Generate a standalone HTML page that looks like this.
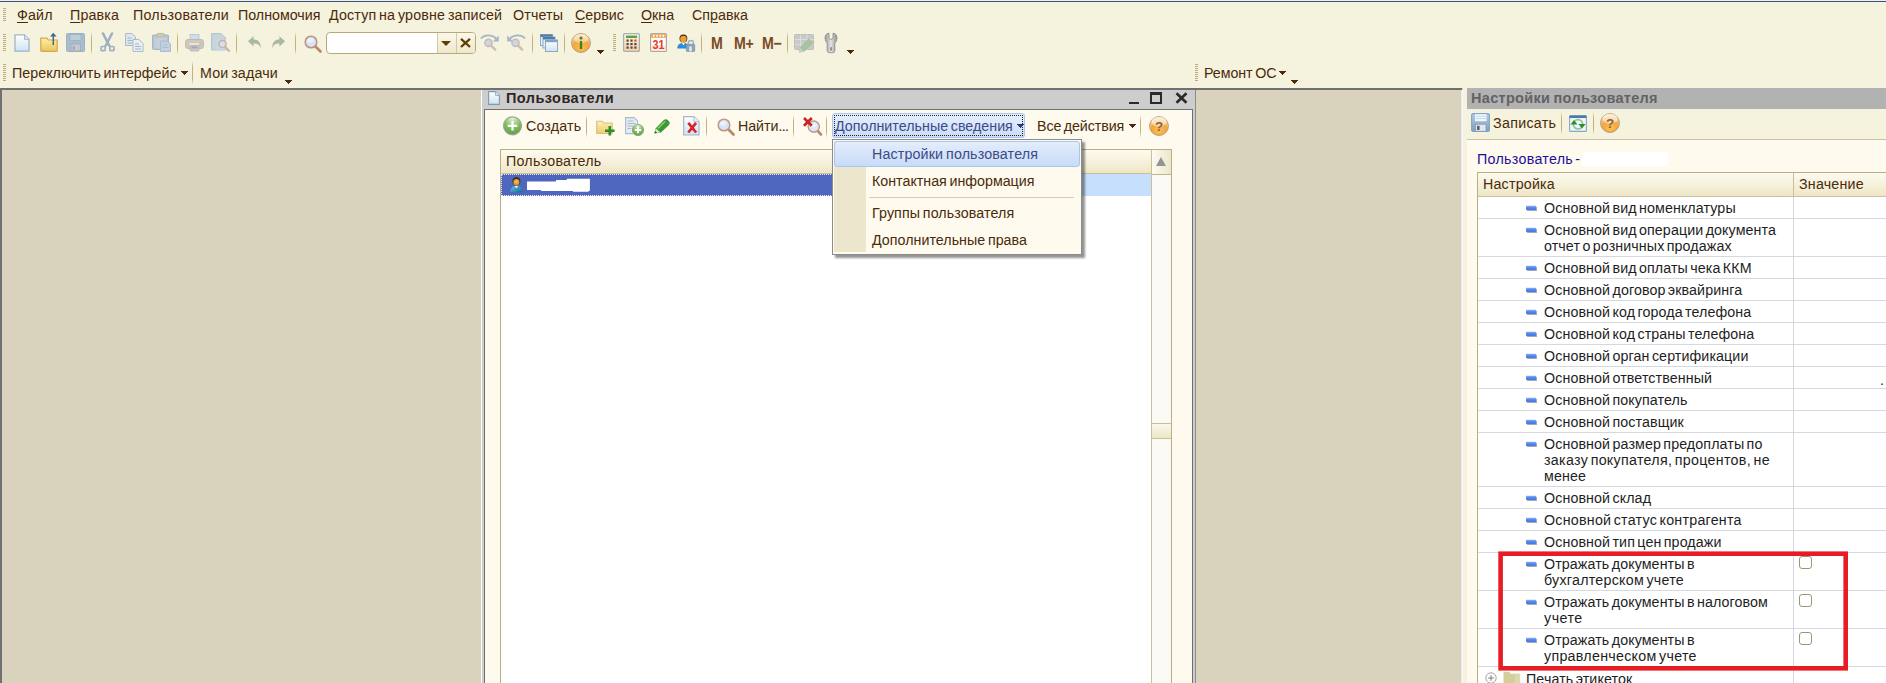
<!DOCTYPE html>
<html lang="ru"><head><meta charset="utf-8"><title>Пользователи</title>
<style>
html,body{margin:0;padding:0}
body{width:1886px;height:683px;overflow:hidden;position:relative;background:#d9d3bd;font-family:"Liberation Sans",sans-serif;font-size:14.25px;line-height:16px;color:#4a2a0a}
.a{position:absolute}
.t{position:absolute;white-space:nowrap;line-height:16px;letter-spacing:.15px;word-spacing:-1.300px}
u{text-decoration:underline;text-underline-offset:1.500px;text-decoration-thickness:1px}
.sep{position:absolute;width:1px;background:#cfc7a4;box-shadow:1px 0 0 #fffdf2}
.grip{position:absolute;width:3px;background:repeating-linear-gradient(to bottom,#b9ad84 0 1px,transparent 1px 2px)}
.arr{position:absolute;width:7px;height:4px;background:#4a2a0a;clip-path:polygon(0 0,7px 0,7px 1px,6px 1px,6px 2px,5px 2px,5px 3px,4px 3px,4px 4px,3px 4px,3px 3px,2px 3px,2px 2px,1px 2px,1px 1px,0 1px)}
svg{position:absolute;overflow:visible}
</style></head><body>
<!-- TOP BAR -->
<div class="a" id="topbar" style="left:0;top:0;width:1886px;height:88px;background:#f5f2dd"></div>
<div class="a" style="left:0;top:0;width:1886px;height:1px;background:#e9eef8"></div>
<div class="a" style="left:0;top:1px;width:1886px;height:1px;background:#43536f"></div>
<!-- workspace top border -->
<div class="a" style="left:0;top:88px;width:1462px;height:2px;background:#707070"></div>
<div class="a" style="left:0;top:88px;width:2px;height:595px;background:#707070"></div>
<div class="grip" style="left:3px;top:8px;height:14px"></div>
<div class="t" style="left:17px;top:7px"><u>Ф</u>айл</div>
<div class="t" style="left:70px;top:7px"><u>П</u>равка</div>
<div class="t" style="left:133px;top:7px;letter-spacing:.25px">Пользователи</div>
<div class="t" style="left:238px;top:7px;letter-spacing:0">Полномочия</div>
<div class="t" style="left:329px;top:7px">Доступ на уровне записей</div>
<div class="t" style="left:513px;top:7px">Отчеты</div>
<div class="t" style="left:575px;top:7px;letter-spacing:.02px"><u>С</u>ервис</div>
<div class="t" style="left:641px;top:7px;letter-spacing:.02px"><u>О</u>кна</div>
<div class="t" style="left:692px;top:7px;letter-spacing:.02px">Сп<u>р</u>авка</div>
<!--MENU-->
<svg width="0" height="0" style="position:absolute"><defs>
<linearGradient id="gDoc" x1="0" y1="0" x2="0" y2="1"><stop offset="0" stop-color="#ffffff"/><stop offset="1" stop-color="#cfe2f3"/></linearGradient>
<linearGradient id="gFold" x1="0" y1="0" x2="0" y2="1"><stop offset="0" stop-color="#fdf0a8"/><stop offset="1" stop-color="#e9c55a"/></linearGradient>
<linearGradient id="gSep" x1="0" y1="0" x2="0" y2="1"><stop offset="0" stop-color="#c4b27c" stop-opacity="0"/><stop offset=".25" stop-color="#c4b27c"/><stop offset=".75" stop-color="#c4b27c"/><stop offset="1" stop-color="#c4b27c" stop-opacity="0"/></linearGradient>
<radialGradient id="gOr" cx=".5" cy=".75" r=".75"><stop offset="0" stop-color="#fbbf55"/><stop offset=".55" stop-color="#f4a63a"/><stop offset="1" stop-color="#fdeccb"/></radialGradient>
<linearGradient id="gBtn" x1="0" y1="0" x2="0" y2="1"><stop offset="0" stop-color="#fbf8ea"/><stop offset="1" stop-color="#efe8cb"/></linearGradient>
<radialGradient id="gGr" cx=".5" cy=".1" r=".95"><stop offset="0" stop-color="#e2f2d4"/><stop offset=".5" stop-color="#84be64"/><stop offset="1" stop-color="#5c9c3e"/></radialGradient>
<linearGradient id="gDash" x1="0" y1="0" x2="0" y2="1"><stop offset="0" stop-color="#8db0f4"/><stop offset=".45" stop-color="#5585ea"/><stop offset="1" stop-color="#4a78de"/></linearGradient>
<linearGradient id="gPeach" x1="0" y1="0" x2="0" y2="1"><stop offset="0" stop-color="#fff4e2"/><stop offset="1" stop-color="#f8cf9f"/></linearGradient>
<linearGradient id="gMetal" x1="0" y1="0" x2="1" y2="0"><stop offset="0" stop-color="#9a9a9a"/><stop offset=".5" stop-color="#e4e4e4"/><stop offset="1" stop-color="#8e8e8e"/></linearGradient>
</defs></svg>
<div class="grip" style="left:3px;top:34px;height:18px"></div>
<!-- new -->
<svg style="left:14px;top:34px" width="16" height="18" viewBox="0 0 16 18"><path d="M1 .8h9.5L15 5.3V17.2H1z" fill="url(#gDoc)" stroke="#9fb4c9" stroke-width="1.3"/><path d="M10.5 .8v4.5H15" fill="#dbe7f3" stroke="#9fb4c9" stroke-width="1"/></svg>
<!-- open -->
<svg style="left:40px;top:32px" width="18" height="20" viewBox="0 0 18 20"><path d="M.8 6.2h6l1.5 1.8h8.9v10.6q0 .8-.8.8H1.6q-.8 0-.8-.8z" fill="url(#gFold)" stroke="#d2a94b" stroke-width="1.2"/><path d="M13.3 13V3.2" stroke="#3f6c8c" stroke-width="1.5" fill="none"/><path d="M10 4.6L13.3 .8l3.3 3.8z" fill="#3f6c8c"/></svg>
<!-- save disabled -->
<svg style="left:66px;top:33px" width="19" height="19" viewBox="0 0 19 19"><rect x=".5" y=".5" width="18" height="18" rx="1" fill="#a9bccb" stroke="#9db2c4"/><rect x="4" y="1.5" width="11" height="6" fill="#bccfd9" stroke="#9ab0c2" stroke-width=".8"/><rect x="5" y="11" width="9.5" height="7" fill="#c7c9cf" stroke="#98abbd" stroke-width=".8"/><rect x="6.8" y="13" width="2" height="4" fill="#98abbd"/></svg>
<div class="a" style="left:91px;top:32px;width:1px;height:23px;background:linear-gradient(#c4b27c00,#c4b27c 25%,#c4b27c 75%,#c4b27c00)"></div>
<!-- cut -->
<svg style="left:100px;top:33px" width="15" height="19" viewBox="0 0 15 19"><path d="M3 .5L9.2 12.5M12 .5L5.8 12.5" stroke="#9db1c5" stroke-width="2.6" fill="none" stroke-linecap="round"/><rect x="1" y="13.5" width="4.2" height="4.2" rx="1" fill="none" stroke="#9db1c5" stroke-width="1.7"/><rect x="9.8" y="13.5" width="4.2" height="4.2" rx="1" fill="none" stroke="#9db1c5" stroke-width="1.7"/><path d="M5 13.5l2.5-3.5 2.5 3.5" stroke="#9db1c5" stroke-width="1.6" fill="none"/></svg>
<!-- copy -->
<svg style="left:125px;top:33px" width="19" height="19" viewBox="0 0 19 19"><path d="M.5 .5h6.5l3.5 3.5v8.5H.5z" fill="#dde6ef" stroke="#a9bccd"/><path d="M2.5 5h4M2.5 7.5h5M2.5 10h5" stroke="#a3b6c9" stroke-width="1"/><path d="M8 6.5h6l4 4v8H8z" fill="#e9eff5" stroke="#a9bccd"/><path d="M10 11h4M10 13.5h6M10 16h6" stroke="#9fb2c6" stroke-width="1"/></svg>
<!-- paste -->
<svg style="left:152px;top:33px" width="19" height="19" viewBox="0 0 19 19"><rect x=".5" y="2" width="16" height="14.5" rx="1" fill="#b9c3d3" stroke="#a5b6cb"/><rect x="5" y=".4" width="7" height="3.6" rx="1" fill="#cfcbb4" stroke="#b3b09c" stroke-width=".8"/><rect x="2.5" y="4.5" width="12" height="11" fill="#c6cfdc"/><path d="M8.5 8h6.5l3.5 3v7.5h-10z" fill="#c3d1df" stroke="#a9bdcf"/><path d="M10.5 12h5M10.5 14.5h6" stroke="#aabdd0" stroke-width="1"/></svg>
<div class="a" style="left:177px;top:32px;width:1px;height:23px;background:linear-gradient(#c4b27c00,#c4b27c 25%,#c4b27c 75%,#c4b27c00)"></div>
<!-- print -->
<svg style="left:185px;top:34px" width="19" height="18" viewBox="0 0 19 18"><rect x="5" y=".5" width="9" height="7" fill="#cfdde8" stroke="#b3c4d2" stroke-width=".8"/><rect x=".6" y="5.5" width="17.8" height="9" rx="2.2" fill="#cfc6bf" stroke="#bdb5b0" stroke-width=".9"/><rect x="4.5" y="9" width="10" height="2" fill="#ece4da"/><rect x="5" y="11.5" width="9" height="5.5" rx="1" fill="#c9c9cb" stroke="#b4b2b2" stroke-width=".8"/><rect x="6.5" y="12.5" width="6" height="2" fill="#a9a7a8"/><rect x="14.3" y="9.3" width="1.5" height="1.5" fill="#a9c8a4"/></svg>
<!-- preview -->
<svg style="left:211px;top:33px" width="19" height="19" viewBox="0 0 19 19"><path d="M.5 .5h9.5l4.5 4.5v12H.5z" fill="#c9d3dc" stroke="#b1c4d3"/><path d="M5 6h9.5v11H5z" fill="#c5d9e8" opacity=".8"/><circle cx="11.5" cy="11" r="3.6" fill="#d3dff0" stroke="#cdb0a0" stroke-width="1.5"/><path d="M14.2 13.8l3.6 4" stroke="#cfb4a4" stroke-width="2.4" stroke-linecap="round"/></svg>
<div class="a" style="left:236px;top:32px;width:1px;height:23px;background:linear-gradient(#c4b27c00,#c4b27c 25%,#c4b27c 75%,#c4b27c00)"></div>
<!-- undo / redo -->
<svg style="left:248px;top:36px" width="13" height="13" viewBox="0 0 13 13"><path d="M0 5.2L5.6 .3v3.1c4.4 0 7.2 2.6 7.2 8.6-1.2-3.4-3.4-4.6-7.2-4.6v3z" fill="#a5b9a3"/></svg>
<svg style="left:272px;top:36px" width="13" height="13" viewBox="0 0 13 13"><path d="M13 5.2L7.4 .3v3.1C3 3.400.2 6 .2 12c1.200-3.400 3.400-4.600 7.200-4.600v3z" fill="#a5b9a3"/></svg>
<div class="a" style="left:295px;top:32px;width:1px;height:23px;background:linear-gradient(#c4b27c00,#c4b27c 25%,#c4b27c 75%,#c4b27c00)"></div>
<!-- search magnifier -->
<svg style="left:304px;top:35px" width="18" height="18" viewBox="0 0 18 18"><path d="M10.500 10.500l6 6" stroke="#b98a68" stroke-width="2.8" stroke-linecap="round"/><circle cx="7" cy="7" r="5.800" fill="#d5e3f8" stroke="#bd917a" stroke-width="1.5"/><ellipse cx="6.200" cy="5.400" rx="3.200" ry="2.200" fill="#eaf2fd"/></svg>
<!-- search box -->
<div class="a" style="left:326px;top:32px;width:148px;height:20px;border:1px solid #b8a979;border-radius:4px;background:#fff;overflow:hidden"><div class="a" style="left:110px;top:0;width:38px;height:20px;background:linear-gradient(#fbf8ea,#efe8cb)"></div><div class="a" style="left:110px;top:0;width:1px;height:20px;background:#d3c9a4"></div><div class="a" style="left:129px;top:0;width:1px;height:20px;background:#d3c9a4"></div></div>
<div class="a" style="left:441px;top:41px;width:0;height:0;border-left:5px solid transparent;border-right:5px solid transparent;border-top:5px solid #5a4100"></div>
<svg style="left:460px;top:38px" width="11" height="10" viewBox="0 0 11 10"><path d="M1 .8l9 8.200M10 .8L1 9" stroke="#5a4100" stroke-width="2.300" fill="none"/></svg>
<!-- find next / prev -->
<svg style="left:480px;top:34px" width="19" height="17" viewBox="0 0 19 17"><path d="M.8 4.500C4.500 .3 12 .3 16.500 4.800" stroke="#a4b7cb" stroke-width="1.700" fill="none"/><path d="M18.800 1.500v6h-6z" fill="#a4b7cb"/><circle cx="8.500" cy="8.800" r="3.600" fill="#c9d7ea" stroke="#cdb9b0" stroke-width="1.500"/><path d="M11.200 11.600l4 4" stroke="#cfbcb4" stroke-width="2.400" stroke-linecap="round"/></svg>
<svg style="left:507px;top:34px" width="19" height="17" viewBox="0 0 19 17"><path d="M18.200 4.500C14.500 .3 7 .3 2.500 4.800" stroke="#a4b7cb" stroke-width="1.700" fill="none"/><path d="M.2 1.500v6h6z" fill="#a4b7cb"/><circle cx="8.500" cy="8.800" r="3.600" fill="#c9d7ea" stroke="#cdb9b0" stroke-width="1.500"/><path d="M11.200 11.600l4 4" stroke="#cfbcb4" stroke-width="2.400" stroke-linecap="round"/></svg>
<div class="a" style="left:532px;top:32px;width:1px;height:23px;background:linear-gradient(#c4b27c00,#c4b27c 25%,#c4b27c 75%,#c4b27c00)"></div>
<!-- windows -->
<svg style="left:540px;top:34px" width="18" height="18" viewBox="0 0 18 18"><rect x=".5" y=".5" width="12" height="11" fill="#e3edf6" stroke="#8fa9c2"/><rect x=".5" y=".5" width="12" height="2.500" fill="#4e7ea6"/><rect x="3" y="3" width="12" height="11" fill="#e3edf6" stroke="#8fa9c2"/><rect x="3" y="3" width="12" height="2.500" fill="#4e7ea6"/><rect x="5.500" y="6" width="12" height="11.500" fill="url(#gDoc)" stroke="#8fa9c2"/><rect x="5.500" y="6" width="12" height="2.200" fill="#7fa3c3"/></svg>
<div class="a" style="left:564px;top:32px;width:1px;height:23px;background:linear-gradient(#c4b27c00,#c4b27c 25%,#c4b27c 75%,#c4b27c00)"></div>
<!-- info -->
<svg style="left:571px;top:33px" width="20" height="20" viewBox="0 0 20 20"><circle cx="10" cy="10" r="9.400" fill="url(#gOr)" stroke="#b59a7c" stroke-width="1"/><ellipse cx="10" cy="5.500" rx="7" ry="4.500" fill="#fff" opacity=".45"/><circle cx="10" cy="5" r="1.500" fill="#3c8422"/><path d="M10 8v8" stroke="#3c8422" stroke-width="2.400"/></svg>
<div class="arr" style="left:597px;top:50px"></div>
<div class="grip" style="left:613px;top:34px;height:18px"></div>
<!-- calculator -->
<svg style="left:623px;top:33px" width="17" height="19" viewBox="0 0 17 19"><rect x=".6" y=".6" width="15.800" height="17.800" rx="1" fill="url(#gPeach)" stroke="#9fb0bf" stroke-width="1.200"/><rect x="3" y="2.600" width="11" height="2.400" fill="#5fa045"/><g fill="#4a4a4a"><rect x="3.500" y="6.500" width="2.200" height="2.200"/><rect x="7.400" y="6.500" width="2.200" height="2.200"/><rect x="3.500" y="10" width="2.200" height="2.200"/><rect x="7.400" y="10" width="2.200" height="2.200"/><rect x="11.300" y="10" width="2.200" height="2.200"/><rect x="3.500" y="13.500" width="2.200" height="2.200"/><rect x="7.400" y="13.500" width="2.200" height="2.200"/><rect x="11.300" y="13.500" width="2.200" height="2.200"/></g><rect x="11.300" y="6.500" width="2.200" height="2.200" fill="#e0483a"/></svg>
<!-- calendar -->
<svg style="left:650px;top:33px" width="17" height="19" viewBox="0 0 17 19"><rect x=".6" y=".6" width="15.800" height="17.800" rx="1" fill="#fff" stroke="#a9a9a4" stroke-width="1.200"/><rect x="1.200" y="1.200" width="14.600" height="3.600" fill="#f0a24a"/><g fill="#fff"><rect x="3" y="1.800" width="1.600" height="2"/><rect x="6.200" y="1.800" width="1.600" height="2"/><rect x="9.400" y="1.800" width="1.600" height="2"/><rect x="12.600" y="1.800" width="1.600" height="2"/></g><rect x="1.200" y="12" width="14.600" height="5.800" fill="#fbe3cc" opacity=".7"/><text x="8.500" y="16.300" text-anchor="middle" font-family="Liberation Sans,sans-serif" font-weight="bold" font-size="12.500" fill="#e4392d" textLength="12" lengthAdjust="spacingAndGlyphs">31</text></svg>
<!-- user lock -->
<svg style="left:677px;top:34px" width="18" height="18" viewBox="0 0 18 18"><circle cx="6.400" cy="4.400" r="3.900" fill="#3c2a14"/><circle cx="6.400" cy="5" r="3.200" fill="#f0a030"/><path d="M.3 14.500c0-4 2.500-5.600 6-5.600s5.800 1.600 5.800 5.600z" fill="#2f8bd8"/><path d="M5 9l1.400 2.500L7.800 9z" fill="#fff"/><path d="M11.300 10.500v-1.300a2.600 2.600 0 015.200 0v1.300" fill="none" stroke="#9fb2c6" stroke-width="1.500"/><rect x="9.300" y="10.300" width="8.400" height="7.200" rx="1" fill="#8da4bd" stroke="#7b93ad" stroke-width=".8"/><rect x="12.300" y="12.500" width="2.400" height="5" fill="#e8eef5"/></svg>
<div class="a" style="left:701px;top:32px;width:1px;height:23px;background:linear-gradient(#c4b27c00,#c4b27c 25%,#c4b27c 75%,#c4b27c00)"></div>
<div class="t" style="left:711px;top:34px;font-weight:bold;font-size:16.500px;line-height:18px;color:#7b4a26;letter-spacing:-.3px;transform:scaleX(.86);transform-origin:0 0">M</div>
<div class="t" style="left:734px;top:34px;font-weight:bold;font-size:16.500px;line-height:18px;color:#7b4a26;letter-spacing:-.3px;transform:scaleX(.86);transform-origin:0 0">M+</div>
<div class="t" style="left:762px;top:34px;font-weight:bold;font-size:16.500px;line-height:18px;color:#7b4a26;letter-spacing:-.3px;transform:scaleX(.86);transform-origin:0 0">M−</div>
<div class="a" style="left:787px;top:32px;width:1px;height:23px;background:linear-gradient(#c4b27c00,#c4b27c 25%,#c4b27c 75%,#c4b27c00)"></div>
<!-- table edit -->
<svg style="left:794px;top:34px" width="20" height="19" viewBox="0 0 20 19"><rect x=".5" y=".5" width="19" height="15" rx="1" fill="#c9c9c7" stroke="#bebebb"/><path d="M.5 5.500h19M.5 10.500h19M6.500 .5v15M13 .5v15" stroke="#dcdcda" stroke-width="1"/><path d="M4.800 18.600L5.800 13.600 14.600 4.200 19.600 9 10.200 17.800z" fill="#a9c1a3"/><path d="M4.800 18.600l1-5 4.400 4.200z" fill="#bfd3bb"/></svg>
<!-- wrench -->
<svg style="left:824px;top:33px" width="14" height="20" viewBox="0 0 14 20"><path d="M1 5Q.8 1.500 3.800 .3H5V5q0 1.200 1 1.200h2q1 0 1-1.200V.3h1.200Q13.200 1.500 13 5q-.2 3.500-2.200 5v7.500q0 2.200-2.300 2.200h-3q-2.300 0-2.300-2.200V10Q1.200 8.500 1 5z" fill="url(#gMetal)" stroke="#909090" stroke-width=".9"/><rect x="6.300" y="14" width="1.500" height="3.800" rx=".7" fill="#7d7d7d"/></svg>
<div class="arr" style="left:847px;top:50px"></div>
<!--TOOLBAR-->
<div class="grip" style="left:3px;top:64px;height:18px"></div>
<div class="t" style="left:12px;top:65px;letter-spacing:.04px">Переключить интерфейс</div>
<div class="arr" style="left:181px;top:71px"></div>
<div class="a" style="left:192px;top:61px;width:1px;height:24px;background:linear-gradient(#c4b27c00,#c4b27c 25%,#c4b27c 75%,#c4b27c00)"></div>
<div class="t" style="left:200px;top:65px">Мои задачи</div>
<div class="arr" style="left:285px;top:80px"></div>
<div class="grip" style="left:1195px;top:64px;height:18px"></div>
<div class="t" style="left:1204px;top:65px;letter-spacing:-.06px">Ремонт ОС</div>
<div class="arr" style="left:1279px;top:71px"></div>
<div class="arr" style="left:1291px;top:80px"></div>
<!--ROW3-->
<!-- middle window -->
<div class="a" style="left:481px;top:90px;width:1px;height:593px;background:#fff"></div>
<div class="a" style="left:482px;top:90px;width:2px;height:593px;background:#cdcdcd"></div>
<div class="a" style="left:482px;top:90px;width:713px;height:19px;background:#cdcdcd"></div>
<div class="a" style="left:1193px;top:90px;width:2px;height:593px;background:#cdcdcd"></div>
<div class="a" style="left:1195px;top:90px;width:1px;height:593px;background:#8c8c8c"></div>
<div class="a" style="left:484px;top:109px;width:709px;height:574px;background:#fefaee;border:1px solid #707070;border-bottom:none;box-sizing:border-box"></div>
<svg style="left:488px;top:91px" width="12" height="14" viewBox="0 0 12 14"><path d="M.6 .6h7l3.800 3.800v9H.6z" fill="url(#gDoc)" stroke="#8199af" stroke-width="1.100"/><path d="M7.600 .6v3.800h3.800" fill="#dfeaf4" stroke="#8ea6bb" stroke-width=".9"/></svg>
<div class="t" style="left:506px;top:90px;font-weight:bold;font-size:14.500px;letter-spacing:.44px;color:#2e2522">Пользователи</div>
<div class="a" style="left:1129px;top:102px;width:10px;height:2px;background:#2a2a2a"></div>
<div class="a" style="left:1150px;top:92px;width:8px;height:7px;border:2px solid #2a2a2a;border-top-width:3px"></div>
<svg style="left:1175px;top:92px" width="13" height="12" viewBox="0 0 13 12"><path d="M1.500 1.200l10 9.600M11.500 1.200l-10 9.600" stroke="#2a2a2a" stroke-width="2.600" fill="none"/></svg>
<!-- win toolbar -->
<svg style="left:503px;top:116px" width="19" height="20" viewBox="0 0 19 20"><circle cx="9.500" cy="9.800" r="9" fill="url(#gGr)" stroke="#97a894" stroke-width="1.200"/><path d="M9.500 5v9.600M4.700 9.800h9.600" stroke="#fff" stroke-width="2.200"/></svg>
<div class="t" style="left:526px;top:118px">Создать</div>
<div class="a sp" style="left:586px;top:115px;width:1px;height:23px;background:linear-gradient(#c4b27c00,#c4b27c 25%,#c4b27c 75%,#c4b27c00)"></div>
<!-- folder+ -->
<svg style="left:596px;top:120px" width="19" height="16" viewBox="0 0 19 16"><path d="M.7 1.200h5.500l1.500 1.800h8.500v10.500H.7z" fill="url(#gFold)" stroke="#d6b566" stroke-width="1.100" opacity=".85"/><path d="M13.800 6v9.500M9 10.800h9.600" stroke="#2c8c2c" stroke-width="2.600"/></svg>
<!-- doc+ -->
<svg style="left:625px;top:117px" width="20" height="19" viewBox="0 0 20 19"><path d="M.6 .6h8.500l3.500 3.500v12.500H.6z" fill="#e4ecf3" stroke="#a9bccd" stroke-width="1.100"/><path d="M2.500 4h6M2.500 6.500h8M2.500 9h6M2.500 11.500h4" stroke="#a9b9c9" stroke-width="1"/><circle cx="13" cy="13" r="5.600" fill="url(#gGr)" stroke="#86a47c" stroke-width=".9"/><path d="M13 9.800v6.400M9.800 13h6.400" stroke="#fff" stroke-width="2"/></svg>
<!-- pencil -->
<svg style="left:654px;top:119px" width="16" height="15" viewBox="0 0 16 15"><path d="M.3 14.500L1.800 9.200 10.300 .5 15.500 5.400 6.700 13.800z" fill="#3a9c2c"/><path d="M10.500 .8l2.200-.6 3 3-.4 2.100z" fill="#2f8424"/><path d="M.5 14.300L2 9.500l4.500 4z" fill="#d9e6d2"/><path d="M.5 14.300l.7-2.300 2 1.700z" fill="#245a1c"/><path d="M4 9.500l7-7" stroke="#8fd07c" stroke-width="1.300"/></svg>
<!-- doc x -->
<svg style="left:683px;top:116px" width="17" height="20" viewBox="0 0 17 20"><path d="M.7 .7h10.300l5 5v13.300H.7z" fill="url(#gDoc)" stroke="#a3b7ca" stroke-width="1.200"/><path d="M11 .7v5h5" fill="#eef3f8" stroke="#a3b7ca" stroke-width=".9"/><path d="M5.300 6.800l7.800 9.700M13.100 6.800L5.300 16.500" stroke="#d6242a" stroke-width="2.700"/></svg>
<div class="a" style="left:706px;top:115px;width:1px;height:23px;background:linear-gradient(#c4b27c00,#c4b27c 25%,#c4b27c 75%,#c4b27c00)"></div>
<svg style="left:717px;top:118px" width="18" height="18" viewBox="0 0 18 18"><path d="M10.500 10.500l6 6" stroke="#b98a68" stroke-width="2.800" stroke-linecap="round"/><circle cx="7" cy="7" r="5.800" fill="#d5e3f8" stroke="#c09882" stroke-width="1.500"/><ellipse cx="6.200" cy="5.400" rx="3.200" ry="2.200" fill="#eaf2fd"/></svg>
<div class="t" style="left:738px;top:118px;letter-spacing:-.05px">Найти<span style="letter-spacing:-.7px">...</span></div>
<div class="a" style="left:793px;top:115px;width:1px;height:23px;background:linear-gradient(#c4b27c00,#c4b27c 25%,#c4b27c 75%,#c4b27c00)"></div>
<svg style="left:803px;top:117px" width="19" height="19" viewBox="0 0 19 19"><path d="M14 13.200l4 4.300" stroke="#b98a68" stroke-width="2.600" stroke-linecap="round"/><circle cx="10.800" cy="9.600" r="5.600" fill="#dbe7f8" stroke="#c09882" stroke-width="1.400"/><ellipse cx="10.500" cy="8.300" rx="3" ry="2" fill="#eef4fd"/><path d="M1 1l7.800 7.800M8.800 1L1 8.800" stroke="#c92424" stroke-width="2.700"/></svg>
<div class="a" style="left:826px;top:115px;width:1px;height:23px;background:linear-gradient(#c4b27c00,#c4b27c 25%,#c4b27c 75%,#c4b27c00)"></div>
<!-- dop sved button -->
<div class="a" style="left:832px;top:113px;width:191px;height:23px;border:1px solid #a9c5f0;border-radius:3px;background:linear-gradient(#e6effd,#cbddf9)"></div>
<div class="a" style="left:834px;top:115px;width:189px;height:21px;border:1px dotted #222;box-sizing:border-box"></div>
<div class="t" style="left:835px;top:118px;color:#3d4a86;letter-spacing:.02px">Дополнительные сведения</div>
<div class="arr" style="left:1017px;top:124px;background:#2c3a7a"></div>
<div class="t" style="left:1037px;top:118px;letter-spacing:-.1px">Все действия</div>
<div class="arr" style="left:1129px;top:124px"></div>
<div class="a" style="left:1140px;top:115px;width:1px;height:23px;background:linear-gradient(#c4b27c00,#c4b27c 25%,#c4b27c 75%,#c4b27c00)"></div>
<svg style="left:1149px;top:116px" width="20" height="20" viewBox="0 0 20 20"><circle cx="10" cy="10" r="9.400" fill="url(#gOr)" stroke="#b59a7c" stroke-width="1"/><ellipse cx="10" cy="5.800" rx="7.500" ry="5" fill="#fff" opacity=".55"/><text x="10" y="14.800" text-anchor="middle" font-family="Liberation Sans,sans-serif" font-weight="bold" font-size="13.500" fill="#8d6046">?</text></svg>
<!--WTB-->
<!-- table -->
<div class="a" style="left:500px;top:149px;width:670px;height:534px;border:1px solid #b9ad84;border-bottom:none;background:#fff"></div>
<div class="a" style="left:501px;top:150px;width:650px;height:23px;background:linear-gradient(#fdfbf0,#f3edd3 70%,#ede5c5)"></div>
<div class="a" style="left:501px;top:173px;width:650px;height:1px;background:#c9bf9b"></div>
<div class="t" style="left:506px;top:153px;letter-spacing:.25px">Пользователь</div>
<div class="a" style="left:501px;top:174px;width:400px;height:22px;background:#4f66bf;outline:1px dotted #e8ecf8;outline-offset:-1px"></div>
<div class="a" style="left:901px;top:174px;width:250px;height:22px;background:#c6dffd"></div>
<svg style="left:509.500px;top:177px" width="13" height="15.500" viewBox="0 0 13 15.500"><defs><linearGradient id="gBody" x1="0" y1="0" x2="1" y2="1"><stop offset="0" stop-color="#6cc0dc"/><stop offset="1" stop-color="#0f6a92"/></linearGradient><radialGradient id="gHead" cx=".5" cy=".4" r=".6"><stop offset="0" stop-color="#f8c060"/><stop offset="1" stop-color="#d88820"/></radialGradient></defs><circle cx="6.400" cy="4.200" r="3.900" fill="#3a2810"/><circle cx="6.400" cy="5.200" r="3.100" fill="url(#gHead)"/><path d="M.3 15.300c0-4.500 2.200-6.300 6.100-6.300s6.100 1.800 6.100 6.300z" fill="url(#gBody)"/><path d="M4.600 9.100l1.800 2.200 1.800-2.200z" fill="#f4f8fa"/></svg>
<svg style="left:527px;top:178px" width="63" height="14" viewBox="0 0 63 14"><path d="M0 3.400H29V2H39.800V.7H62.900V12.500L61 13.700H46V13H14V12H0z" fill="#fff"/></svg>
<!-- scrollbar -->
<div class="a" style="left:1151px;top:150px;width:1px;height:533px;background:#c9bf9b"></div>
<div class="a" style="left:1152px;top:150px;width:19px;height:533px;background:#faf9f3"></div>
<div class="a" style="left:1152px;top:150px;width:19px;height:24px;background:linear-gradient(90deg,#fdfbf1,#ece6cb);border-bottom:1px solid #c0b48a"></div>
<div class="a" style="left:1156px;top:157px;width:0;height:0;border-left:5px solid transparent;border-right:5px solid transparent;border-bottom:9px solid #949494"></div>
<div class="a" style="left:1152px;top:423px;width:19px;height:14px;background:linear-gradient(#fbf8ea,#ece5c8);border-top:1px solid #c9bf9b;border-bottom:1px solid #c9bf9b"></div>
<!-- popup menu -->
<div class="a" style="left:832px;top:139px;width:248px;height:114px;border:1px solid #8c8c8c;background:#fefaee;box-shadow:3px 3px 2px rgba(0,0,0,.42)"></div>
<div class="a" style="left:834px;top:141px;width:32px;height:111px;background:#ece6cc"></div>
<div class="a" style="left:834px;top:141px;width:244px;height:24px;border:1px solid #a9c5f0;border-radius:3px;background:linear-gradient(#e3edfc,#c8dbf8)"></div>
<div class="t" style="left:872px;top:146px;color:#3d4a86;letter-spacing:.15px">Настройки пользователя</div>
<div class="t" style="left:872px;top:173px;letter-spacing:0">Контактная информация</div>
<div class="a" style="left:869px;top:197px;width:205px;height:1px;background:#d6ceb0"></div>
<div class="t" style="left:872px;top:205px;letter-spacing:.1px">Группы пользователя</div>
<div class="t" style="left:872px;top:232px;letter-spacing:.03px">Дополнительные права</div>
<!--POPUP-->
<!--MIDWIN-->
<!-- right panel -->
<div class="a" style="left:1461px;top:90px;width:2px;height:593px;background:linear-gradient(90deg,#e4e4ea,#fff)"></div>
<div class="a" style="left:1463px;top:88px;width:423px;height:595px;background:#fefaee"></div>
<div class="a" style="left:1463px;top:88px;width:4px;height:595px;background:#f5f2dd"></div>
<div class="a" style="left:1467px;top:88px;width:419px;height:21px;background:#b2b2b2"></div>
<div class="t" style="left:1471px;top:90px;font-weight:bold;font-size:14.500px;color:#626262;letter-spacing:.3px;word-spacing:-1px">Настройки пользователя</div>
<div class="a" style="left:1467px;top:109px;width:419px;height:30px;background:#f5f2dd"></div>
<div class="a" style="left:1467px;top:139px;width:419px;height:1px;background:#cbc3a1"></div>
<svg style="left:1471px;top:113px" width="19" height="19" viewBox="0 0 19 19"><defs><linearGradient id="gSv" x1="0" y1="0" x2="0" y2="1"><stop offset="0" stop-color="#b4cde6"/><stop offset="1" stop-color="#7d9fc2"/></linearGradient></defs><rect x=".6" y=".6" width="17.800" height="17.800" rx="1.500" fill="url(#gSv)" stroke="#86a4c2" stroke-width="1.100"/><rect x="4" y="1.200" width="11.500" height="7" fill="#f2f8fc"/><path d="M4.500 3.300h10.500M4.500 5.500h10.500" stroke="#bfd9ea" stroke-width="1"/><rect x="4.500" y="11.200" width="10.500" height="7" fill="#e4e6ea" stroke="#6f8daa" stroke-width=".6"/><rect x="6" y="12.800" width="2.600" height="4.200" fill="#4f647c"/></svg>
<div class="t" style="left:1493px;top:115px;letter-spacing:.3px">Записать</div>
<div class="a" style="left:1561px;top:112px;width:1px;height:23px;background:linear-gradient(#c4b27c00,#c4b27c 25%,#c4b27c 75%,#c4b27c00)"></div>
<svg style="left:1569px;top:115px" width="18" height="17" viewBox="0 0 18 17"><rect x=".6" y=".6" width="16.800" height="15.800" rx="1" fill="#eef4fa" stroke="#8aa6c4" stroke-width="1.100"/><rect x=".6" y=".6" width="16.800" height="2.400" fill="#4c7aa8"/><circle cx="9" cy="9.300" r="4.700" fill="none" stroke="#8cc88c" stroke-width="1.700"/><path d="M1.500 9.600L5 5l3.500 4.600z" fill="#2f8a2f"/><path d="M9.500 9L13 13.600 16.500 9z" fill="#2f8a2f"/></svg>
<div class="a" style="left:1593px;top:112px;width:1px;height:23px;background:linear-gradient(#c4b27c00,#c4b27c 25%,#c4b27c 75%,#c4b27c00)"></div>
<svg style="left:1600px;top:113px" width="20" height="20" viewBox="0 0 20 20"><circle cx="10" cy="10" r="9.400" fill="url(#gOr)" stroke="#b59a7c" stroke-width="1"/><ellipse cx="10" cy="5.800" rx="7.500" ry="5" fill="#fff" opacity=".55"/><text x="10" y="14.800" text-anchor="middle" font-family="Liberation Sans,sans-serif" font-weight="bold" font-size="13.500" fill="#8d6046">?</text></svg>
<div class="t" style="left:1477px;top:151px;color:#1d0f9a;letter-spacing:.3px;word-spacing:-2px">Пользователь -</div>
<div class="a" style="left:1582px;top:152px;width:86px;height:14px;background:#fff;border-radius:3px"></div>
<!-- table -->
<div class="a" style="left:1477px;top:172px;width:409px;height:511px;background:#fff;border-left:1px solid #b9ad84;border-top:1px solid #b9ad84;box-sizing:border-box"></div>
<div class="a" style="left:1478px;top:173px;width:408px;height:23px;background:linear-gradient(#fdfbf0,#f3edd3 70%,#ede5c5)"></div>
<div class="a" style="left:1478px;top:196px;width:408px;height:1px;background:#c9bf9b"></div>
<div class="a" style="left:1793px;top:173px;width:1px;height:23px;background:#c9bf9b"></div>
<div class="a" style="left:1793px;top:197px;width:1px;height:486px;background:#d3d9de"></div>
<div class="t" style="left:1483px;top:176px;letter-spacing:.2px">Настройка</div>
<div class="t" style="left:1799px;top:176px;letter-spacing:.2px">Значение</div>
<div class="a" style="left:1478px;top:218px;width:408px;height:1px;background:#d3d9de"></div>
<svg style="left:1525px;top:204.6px" width="13" height="8" viewBox="0 0 13 8"><rect x="2" y="1.800" width="10" height="4.200" rx=".6" fill="#56627e" opacity=".55"/><rect x="1" y=".8" width="10" height="4.200" rx=".7" fill="url(#gDash)"/></svg>
<div class="t" style="left:1544px;top:200px;color:#1e1e1e;letter-spacing:.1px;word-spacing:-1.700px">Основной вид номенклатуры</div>
<div class="a" style="left:1478px;top:256px;width:408px;height:1px;background:#d3d9de"></div>
<svg style="left:1525px;top:226.6px" width="13" height="8" viewBox="0 0 13 8"><rect x="2" y="1.800" width="10" height="4.200" rx=".6" fill="#56627e" opacity=".55"/><rect x="1" y=".8" width="10" height="4.200" rx=".7" fill="url(#gDash)"/></svg>
<div class="t" style="left:1544px;top:222px;color:#1e1e1e;letter-spacing:.1px;word-spacing:-1.700px">Основной вид операции документа<br>отчет о розничных продажах</div>
<div class="a" style="left:1478px;top:278px;width:408px;height:1px;background:#d3d9de"></div>
<svg style="left:1525px;top:264.6px" width="13" height="8" viewBox="0 0 13 8"><rect x="2" y="1.800" width="10" height="4.200" rx=".6" fill="#56627e" opacity=".55"/><rect x="1" y=".8" width="10" height="4.200" rx=".7" fill="url(#gDash)"/></svg>
<div class="t" style="left:1544px;top:260px;color:#1e1e1e;letter-spacing:.1px;word-spacing:-1.700px">Основной вид оплаты чека ККМ</div>
<div class="a" style="left:1478px;top:300px;width:408px;height:1px;background:#d3d9de"></div>
<svg style="left:1525px;top:286.6px" width="13" height="8" viewBox="0 0 13 8"><rect x="2" y="1.800" width="10" height="4.200" rx=".6" fill="#56627e" opacity=".55"/><rect x="1" y=".8" width="10" height="4.200" rx=".7" fill="url(#gDash)"/></svg>
<div class="t" style="left:1544px;top:282px;color:#1e1e1e;letter-spacing:.1px;word-spacing:-1.700px">Основной договор эквайринга</div>
<div class="a" style="left:1478px;top:322px;width:408px;height:1px;background:#d3d9de"></div>
<svg style="left:1525px;top:308.6px" width="13" height="8" viewBox="0 0 13 8"><rect x="2" y="1.800" width="10" height="4.200" rx=".6" fill="#56627e" opacity=".55"/><rect x="1" y=".8" width="10" height="4.200" rx=".7" fill="url(#gDash)"/></svg>
<div class="t" style="left:1544px;top:304px;color:#1e1e1e;letter-spacing:.1px;word-spacing:-1.700px">Основной код города телефона</div>
<div class="a" style="left:1478px;top:344px;width:408px;height:1px;background:#d3d9de"></div>
<svg style="left:1525px;top:330.6px" width="13" height="8" viewBox="0 0 13 8"><rect x="2" y="1.800" width="10" height="4.200" rx=".6" fill="#56627e" opacity=".55"/><rect x="1" y=".8" width="10" height="4.200" rx=".7" fill="url(#gDash)"/></svg>
<div class="t" style="left:1544px;top:326px;color:#1e1e1e;letter-spacing:.1px;word-spacing:-1.700px">Основной код страны телефона</div>
<div class="a" style="left:1478px;top:366px;width:408px;height:1px;background:#d3d9de"></div>
<svg style="left:1525px;top:352.6px" width="13" height="8" viewBox="0 0 13 8"><rect x="2" y="1.800" width="10" height="4.200" rx=".6" fill="#56627e" opacity=".55"/><rect x="1" y=".8" width="10" height="4.200" rx=".7" fill="url(#gDash)"/></svg>
<div class="t" style="left:1544px;top:348px;color:#1e1e1e;letter-spacing:.1px;word-spacing:-1.700px">Основной орган сертификации</div>
<div class="a" style="left:1478px;top:388px;width:408px;height:1px;background:#d3d9de"></div>
<svg style="left:1525px;top:374.6px" width="13" height="8" viewBox="0 0 13 8"><rect x="2" y="1.800" width="10" height="4.200" rx=".6" fill="#56627e" opacity=".55"/><rect x="1" y=".8" width="10" height="4.200" rx=".7" fill="url(#gDash)"/></svg>
<div class="t" style="left:1544px;top:370px;color:#1e1e1e;letter-spacing:.1px;word-spacing:-1.700px">Основной ответственный</div>
<div class="a" style="left:1478px;top:410px;width:408px;height:1px;background:#d3d9de"></div>
<svg style="left:1525px;top:396.6px" width="13" height="8" viewBox="0 0 13 8"><rect x="2" y="1.800" width="10" height="4.200" rx=".6" fill="#56627e" opacity=".55"/><rect x="1" y=".8" width="10" height="4.200" rx=".7" fill="url(#gDash)"/></svg>
<div class="t" style="left:1544px;top:392px;color:#1e1e1e;letter-spacing:.1px;word-spacing:-1.700px">Основной покупатель</div>
<div class="a" style="left:1478px;top:432px;width:408px;height:1px;background:#d3d9de"></div>
<svg style="left:1525px;top:418.6px" width="13" height="8" viewBox="0 0 13 8"><rect x="2" y="1.800" width="10" height="4.200" rx=".6" fill="#56627e" opacity=".55"/><rect x="1" y=".8" width="10" height="4.200" rx=".7" fill="url(#gDash)"/></svg>
<div class="t" style="left:1544px;top:414px;color:#1e1e1e;letter-spacing:.1px;word-spacing:-1.700px">Основной поставщик</div>
<div class="a" style="left:1478px;top:486px;width:408px;height:1px;background:#d3d9de"></div>
<svg style="left:1525px;top:440.6px" width="13" height="8" viewBox="0 0 13 8"><rect x="2" y="1.800" width="10" height="4.200" rx=".6" fill="#56627e" opacity=".55"/><rect x="1" y=".8" width="10" height="4.200" rx=".7" fill="url(#gDash)"/></svg>
<div class="t" style="left:1544px;top:436px;color:#1e1e1e;letter-spacing:.1px;word-spacing:-1.700px">Основной размер предоплаты по<br><span style="letter-spacing:.3px">заказу покупателя, процентов, не</span><br>менее</div>
<div class="a" style="left:1478px;top:508px;width:408px;height:1px;background:#d3d9de"></div>
<svg style="left:1525px;top:494.6px" width="13" height="8" viewBox="0 0 13 8"><rect x="2" y="1.800" width="10" height="4.200" rx=".6" fill="#56627e" opacity=".55"/><rect x="1" y=".8" width="10" height="4.200" rx=".7" fill="url(#gDash)"/></svg>
<div class="t" style="left:1544px;top:490px;color:#1e1e1e;letter-spacing:.1px;word-spacing:-1.700px">Основной склад</div>
<div class="a" style="left:1478px;top:530px;width:408px;height:1px;background:#d3d9de"></div>
<svg style="left:1525px;top:516.6px" width="13" height="8" viewBox="0 0 13 8"><rect x="2" y="1.800" width="10" height="4.200" rx=".6" fill="#56627e" opacity=".55"/><rect x="1" y=".8" width="10" height="4.200" rx=".7" fill="url(#gDash)"/></svg>
<div class="t" style="left:1544px;top:512px;color:#1e1e1e;letter-spacing:.1px;word-spacing:-1.700px"><span style="letter-spacing:.24px">Основной статус контрагента</span></div>
<div class="a" style="left:1478px;top:552px;width:408px;height:1px;background:#d3d9de"></div>
<svg style="left:1525px;top:538.6px" width="13" height="8" viewBox="0 0 13 8"><rect x="2" y="1.800" width="10" height="4.200" rx=".6" fill="#56627e" opacity=".55"/><rect x="1" y=".8" width="10" height="4.200" rx=".7" fill="url(#gDash)"/></svg>
<div class="t" style="left:1544px;top:534px;color:#1e1e1e;letter-spacing:.1px;word-spacing:-1.700px">Основной тип цен продажи</div>
<div class="a" style="left:1478px;top:590px;width:408px;height:1px;background:#d3d9de"></div>
<svg style="left:1525px;top:560.6px" width="13" height="8" viewBox="0 0 13 8"><rect x="2" y="1.800" width="10" height="4.200" rx=".6" fill="#56627e" opacity=".55"/><rect x="1" y=".8" width="10" height="4.200" rx=".7" fill="url(#gDash)"/></svg>
<div class="t" style="left:1544px;top:556px;color:#1e1e1e;letter-spacing:.1px;word-spacing:-1.700px">Отражать документы в<br><span style="letter-spacing:.25px">бухгалтерском учете</span></div>
<div class="a" style="left:1799px;top:556px;width:11px;height:11px;border:1px solid #9d9676;border-radius:3px;background:#fff"></div>
<div class="a" style="left:1478px;top:628px;width:408px;height:1px;background:#d3d9de"></div>
<svg style="left:1525px;top:598.6px" width="13" height="8" viewBox="0 0 13 8"><rect x="2" y="1.800" width="10" height="4.200" rx=".6" fill="#56627e" opacity=".55"/><rect x="1" y=".8" width="10" height="4.200" rx=".7" fill="url(#gDash)"/></svg>
<div class="t" style="left:1544px;top:594px;color:#1e1e1e;letter-spacing:.1px;word-spacing:-1.700px">Отражать документы в налоговом<br><span style="letter-spacing:.5px">учете</span></div>
<div class="a" style="left:1799px;top:594px;width:11px;height:11px;border:1px solid #9d9676;border-radius:3px;background:#fff"></div>
<div class="a" style="left:1478px;top:666px;width:408px;height:1px;background:#d3d9de"></div>
<svg style="left:1525px;top:636.6px" width="13" height="8" viewBox="0 0 13 8"><rect x="2" y="1.800" width="10" height="4.200" rx=".6" fill="#56627e" opacity=".55"/><rect x="1" y=".8" width="10" height="4.200" rx=".7" fill="url(#gDash)"/></svg>
<div class="t" style="left:1544px;top:632px;color:#1e1e1e;letter-spacing:.1px;word-spacing:-1.700px">Отражать документы в<br><span style="letter-spacing:.28px">управленческом учете</span></div>
<div class="a" style="left:1799px;top:632px;width:11px;height:11px;border:1px solid #9d9676;border-radius:3px;background:#fff"></div>
<svg style="left:1484.500px;top:671.500px" width="12" height="12" viewBox="0 0 12 12"><circle cx="6" cy="6" r="5.200" fill="#fcfcfc" stroke="#a8a8a8" stroke-width="1"/><path d="M6 3.200v5.600M3.200 6h5.600" stroke="#7a7a7a" stroke-width="1"/></svg>
<svg style="left:1503px;top:671px" width="18" height="12" viewBox="0 0 18 12"><path d="M.5 12V1.500q0-.8.8-.8h4.700q.8 0 1 .8l.3 1.200h9.200q.6 0 .6.600V12z" fill="#d3ce9a"/><path d="M12 2.700h4.500q.6 0 .6.600V12H12z" fill="#ddd9ae"/></svg>
<div class="t" style="left:1526px;top:671px;color:#1e1e1e;letter-spacing:.1px;word-spacing:-1.700px">Печать этикеток</div>
<svg style="left:0;top:0" width="1886" height="683" viewBox="0 0 1886 683"><rect x="1500.600" y="553.700" width="345.100" height="114.600" fill="none" stroke="#e81c24" stroke-width="4.600"/></svg>
<div class="t" style="left:1880px;top:372px;color:#1e1e1e">.</div>
<!--RIGHT-->
</body></html>
